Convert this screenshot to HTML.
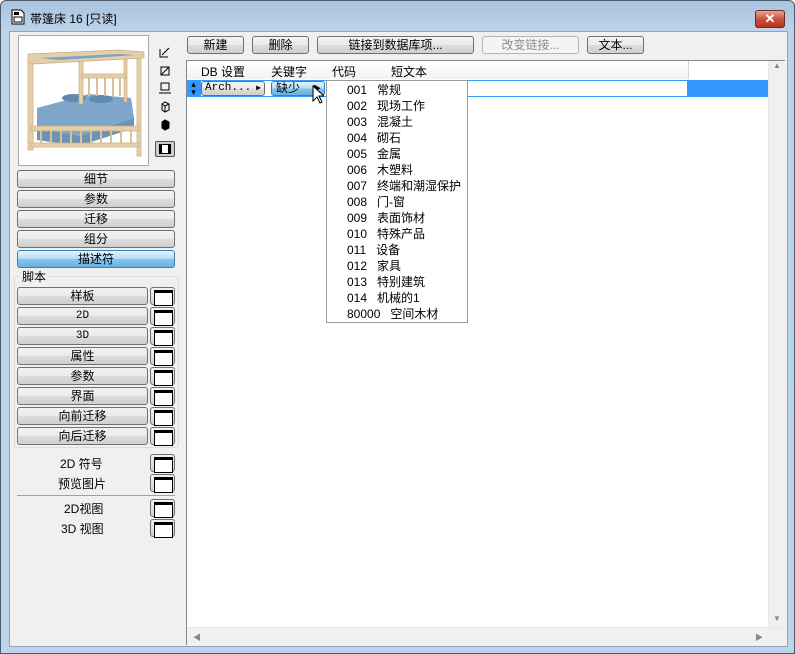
<!DOCTYPE html>
<html><head><meta charset="utf-8"><style>
*{box-sizing:border-box;margin:0;padding:0}
body{width:795px;height:654px;position:relative;overflow:hidden;font-family:"Liberation Sans","Noto Sans CJK SC",sans-serif;font-size:12px;color:#000;background:#fff}
.win{position:absolute;left:0;top:0;width:795px;height:654px;border:1px solid #4a5b6e;border-radius:6px 6px 0 0;background:linear-gradient(#a9c3de,#bcd3ea 30px,#bdd4eb)}
.client{position:absolute;left:8px;top:30px;width:779px;height:616px;background:#f0f0f0;border:1px solid #8ea4bc}
.in{position:absolute;left:-2px;top:-2px;width:781px;height:618px}
.a{position:absolute}
.btn{position:absolute;height:18px;border:1px solid #707070;border-radius:3px;background:linear-gradient(#f2f2f2,#ebebeb 50%,#dddddd 51%,#cfcfcf);text-align:center;line-height:16px;font-size:12px;white-space:nowrap}
.blue{background:linear-gradient(#e3f3fc,#b4dcf5 50%,#86c4ec 51%,#68b1e0);border-color:#3c7fb1}
.ico{position:absolute;width:25px;height:18px;border:1px solid #707070;border-radius:3px;background:linear-gradient(#f2f2f2,#d0d0d0)}
.ico:after{content:"";position:absolute;left:3px;top:2px;width:17px;height:12px;border:1px solid #000;border-top-width:3px;background:#fff}
.lbl{position:absolute;font-size:12px;white-space:nowrap}
.menu div{height:16px;line-height:16px;white-space:nowrap}
</style></head><body>
<div class="win">
 <svg class="a" style="left:10px;top:8px" width="14" height="16" viewBox="0 0 14 16"><path d="M1 1h9l3 3v11H1z" fill="#fff" stroke="#000"/><rect x="3" y="3" width="5" height="3" fill="#000"/><rect x="3" y="8" width="8" height="5" fill="none" stroke="#000"/></svg>
 <div class="lbl" style="left:29px;top:9px;font-size:12px">帯篷床 16 [只读]</div>
 <div class="a" style="left:754px;top:9px;width:30px;height:18px;border:1px solid #6b2a22;border-radius:3px;background:linear-gradient(#e8a497,#c9553f 50%,#b8321c);color:#fff;text-align:center;font-weight:bold;line-height:16px;font-size:13px">✕</div>
 <div class="client"><div class="in">
  <!-- preview -->
  <div class="a" style="left:10px;top:5px;width:131px;height:131px;background:#fff;border:1px solid #aaa">
   <svg width="129" height="129" viewBox="0 0 129 129">
    <path d="M18 72 L70 58 L112 62 L115 82 L60 100 L18 92z" fill="#7fa6c8"/>
    <path d="M18 92 L60 100 L115 82 L115 92 L60 110 L18 104z" fill="#6b93b8"/>
    <ellipse cx="55" cy="62" rx="12" ry="4" fill="#5f89b0"/><ellipse cx="82" cy="63" rx="12" ry="4" fill="#5f89b0"/>
    <g fill="#e4cfa8" stroke="#c7ad80" stroke-width="0.7">
     <rect x="9" y="22" width="5" height="92"/><rect x="118" y="22" width="4" height="98"/>
     <rect x="60" y="18" width="4" height="50"/><rect x="105" y="18" width="3" height="48"/>
     <path d="M9 18 L100 14 L125 16 L125 22 L14 28 L9 26z"/>
     <rect x="63" y="38" width="44" height="4"/>
     <rect x="12" y="90" width="108" height="5"/><rect x="12" y="107" width="108" height="4"/>
    </g>
    <path d="M20 22 L100 18 L118 19 L40 24z" fill="#7aa4c6"/>
    <g stroke="#d9c096" stroke-width="2">
     <line x1="70" y1="42" x2="70" y2="60"/><line x1="78" y1="42" x2="78" y2="60"/><line x1="86" y1="42" x2="86" y2="60"/><line x1="94" y1="42" x2="94" y2="60"/><line x1="101" y1="42" x2="101" y2="60"/>
     <line x1="22" y1="95" x2="22" y2="107"/><line x1="32" y1="95" x2="32" y2="107"/><line x1="42" y1="95" x2="42" y2="107"/><line x1="52" y1="95" x2="52" y2="107"/><line x1="62" y1="95" x2="62" y2="107"/><line x1="72" y1="95" x2="72" y2="107"/><line x1="82" y1="95" x2="82" y2="107"/><line x1="92" y1="95" x2="92" y2="107"/><line x1="102" y1="95" x2="102" y2="107"/><line x1="112" y1="95" x2="112" y2="107"/>
    </g>
   </svg>
  </div>
  <svg class="a" style="left:150px;top:17px" width="14" height="90" viewBox="0 0 14 90" fill="none" stroke="#000">
   <path d="M2 2v8h8M4 8l7-7"/>
   <rect x="3" y="20" width="8" height="8"/><path d="M3 28l8-8"/>
   <path d="M3 36h8v7H3zM1 46h12"/>
   <path d="M4 57l3-2 4 2v6l-4 2-3-2zM4 57l3 2 4-2M7 59v6"/>
   <path d="M4 75l3-2 4 2v6l-4 2-3-2z" fill="#000"/>
  </svg>
  <div class="a" style="left:147px;top:111px;width:20px;height:16px;border:1px solid #555;border-radius:2px;background:#ccc"><div style="margin:2px 3px;width:12px;height:10px;border:1px solid #000;border-left-width:3px;border-right-width:3px;background:#fff"></div></div>

  <div class="btn" style="left:9px;top:140px;width:158px">细节</div>
  <div class="btn" style="left:9px;top:160px;width:158px">参数</div>
  <div class="btn" style="left:9px;top:180px;width:158px">迁移</div>
  <div class="btn" style="left:9px;top:200px;width:158px">组分</div>
  <div class="btn blue" style="left:9px;top:220px;width:158px">描述符</div>
  <div class="a" style="left:6px;top:246px;width:165px;height:172px;border:1px solid #dcdcdc;border-radius:3px"></div>
  <div class="lbl" style="left:12px;top:238px;background:#f0f0f0;padding:0 2px">脚本</div>
  <div class="btn" style="left:9px;top:257px;width:131px">样板</div><div class="ico" style="left:142px;top:257px"></div>
  <div class="btn" style="left:9px;top:277px;width:131px;font-family:'Liberation Mono',monospace;font-size:11px">2D</div><div class="ico" style="left:142px;top:277px"></div>
  <div class="btn" style="left:9px;top:297px;width:131px;font-family:'Liberation Mono',monospace;font-size:11px">3D</div><div class="ico" style="left:142px;top:297px"></div>
  <div class="btn" style="left:9px;top:317px;width:131px">属性</div><div class="ico" style="left:142px;top:317px"></div>
  <div class="btn" style="left:9px;top:337px;width:131px">参数</div><div class="ico" style="left:142px;top:337px"></div>
  <div class="btn" style="left:9px;top:357px;width:131px">界面</div><div class="ico" style="left:142px;top:357px"></div>
  <div class="btn" style="left:9px;top:377px;width:131px">向前迁移</div><div class="ico" style="left:142px;top:377px"></div>
  <div class="btn" style="left:9px;top:397px;width:131px">向后迁移</div><div class="ico" style="left:142px;top:397px"></div>
  <div class="lbl" style="left:52px;top:425px">2D 符号</div><div class="ico" style="left:142px;top:424px"></div>
  <div class="lbl" style="left:50px;top:445px">预览图片</div><div class="ico" style="left:142px;top:444px"></div>
  <div class="a" style="left:9px;top:465px;width:158px;height:1px;background:#a0a0a0"></div>
  <div class="lbl" style="left:56px;top:470px">2D视图</div><div class="ico" style="left:142px;top:469px"></div>
  <div class="lbl" style="left:53px;top:490px">3D 视图</div><div class="ico" style="left:142px;top:489px"></div>

  <!-- top buttons -->
  <div class="btn" style="left:179px;top:6px;width:57px">新建</div>
  <div class="btn" style="left:244px;top:6px;width:57px">删除</div>
  <div class="btn" style="left:309px;top:6px;width:157px">链接到数据库项...</div>
  <div class="btn" style="left:474px;top:6px;width:97px;color:#8d8d8d;border-color:#b5b5b5;background:#f4f4f4">改变链接...</div>
  <div class="btn" style="left:579px;top:6px;width:57px">文本...</div>

  <!-- list -->
  <div class="a" style="left:178px;top:30px;width:599px;height:585px;background:#fff;border:1px solid #828790">
   <div class="a" style="left:0;top:0;width:502px;height:18px;background:linear-gradient(#fff,#f2f3f5);border-right:1px solid #d5d5d5"></div>
   <div class="lbl" style="left:14px;top:2px">DB 设置</div>
   <div class="lbl" style="left:84px;top:2px">关键字</div>
   <div class="lbl" style="left:145px;top:2px">代码</div>
   <div class="lbl" style="left:204px;top:2px">短文本</div>
   <div class="a" style="left:0;top:19px;width:581px;height:17px;background:#3399ff"></div>
   <div class="a" style="left:14px;top:20px;width:486px;height:15px;background:#fff"></div>
   <div class="a" style="left:0;top:19px;width:13px;height:17px;background:#3399ff;color:#000;font-size:9px;text-align:center;line-height:8px">▴<br>▾</div>
   <div class="btn" style="left:14px;top:20px;width:64px;height:15px;line-height:13px;text-align:left;padding-left:3px;font-family:'Liberation Mono',monospace;font-size:11px">Arch...<span style="position:absolute;right:3px;font-size:8px">▶</span></div>
   <div class="a" style="left:78px;top:20px;width:5px;height:15px;background:#fff"></div>
   <div class="btn blue" style="left:84px;top:20px;width:54px;height:15px;line-height:13px;text-align:left;padding-left:4px">缺少<span style="position:absolute;right:3px;font-size:8px">▶</span></div>
   <svg class="a" style="left:125px;top:24px" width="12" height="20" viewBox="0 0 12 20"><path d="M1 1v15l4-4 3 6 2-1-3-6h5z" fill="#fff" stroke="#000"/></svg>
   <div class="a" style="left:581px;top:0;width:17px;height:566px;background:#f0f0f0;border-left:1px solid #e6e6e6;color:#888;font-size:8px;text-align:center">▲<div style="position:absolute;bottom:4px;width:100%">▼</div></div>
   <div class="a" style="left:0;top:566px;width:598px;height:18px;background:#f0f0f0;border-top:1px solid #e6e6e6;color:#888;font-size:8px"><span style="position:absolute;left:6px;top:4px">◀</span><span style="position:absolute;left:568px;top:4px">▶</span></div>
  </div>
  <!-- dropdown -->
  <div class="a menu" style="left:318px;top:50px;width:142px;height:243px;background:#fff;border:1px solid #9a9a9a;padding:1px 0 0 20px">
   <div>001&nbsp;&nbsp;&nbsp;常规</div><div>002&nbsp;&nbsp;&nbsp;现场工作</div><div>003&nbsp;&nbsp;&nbsp;混凝土</div><div>004&nbsp;&nbsp;&nbsp;砌石</div><div>005&nbsp;&nbsp;&nbsp;金属</div><div>006&nbsp;&nbsp;&nbsp;木塑料</div><div>007&nbsp;&nbsp;&nbsp;终端和潮湿保护</div><div>008&nbsp;&nbsp;&nbsp;门-窗</div><div>009&nbsp;&nbsp;&nbsp;表面饰材</div><div>010&nbsp;&nbsp;&nbsp;特殊产品</div><div>011&nbsp;&nbsp;&nbsp;设备</div><div>012&nbsp;&nbsp;&nbsp;家具</div><div>013&nbsp;&nbsp;&nbsp;特别建筑</div><div>014&nbsp;&nbsp;&nbsp;机械的1</div><div>80000&nbsp;&nbsp;&nbsp;空间木材</div>
  </div>
 </div></div>
</div>
</body></html>
